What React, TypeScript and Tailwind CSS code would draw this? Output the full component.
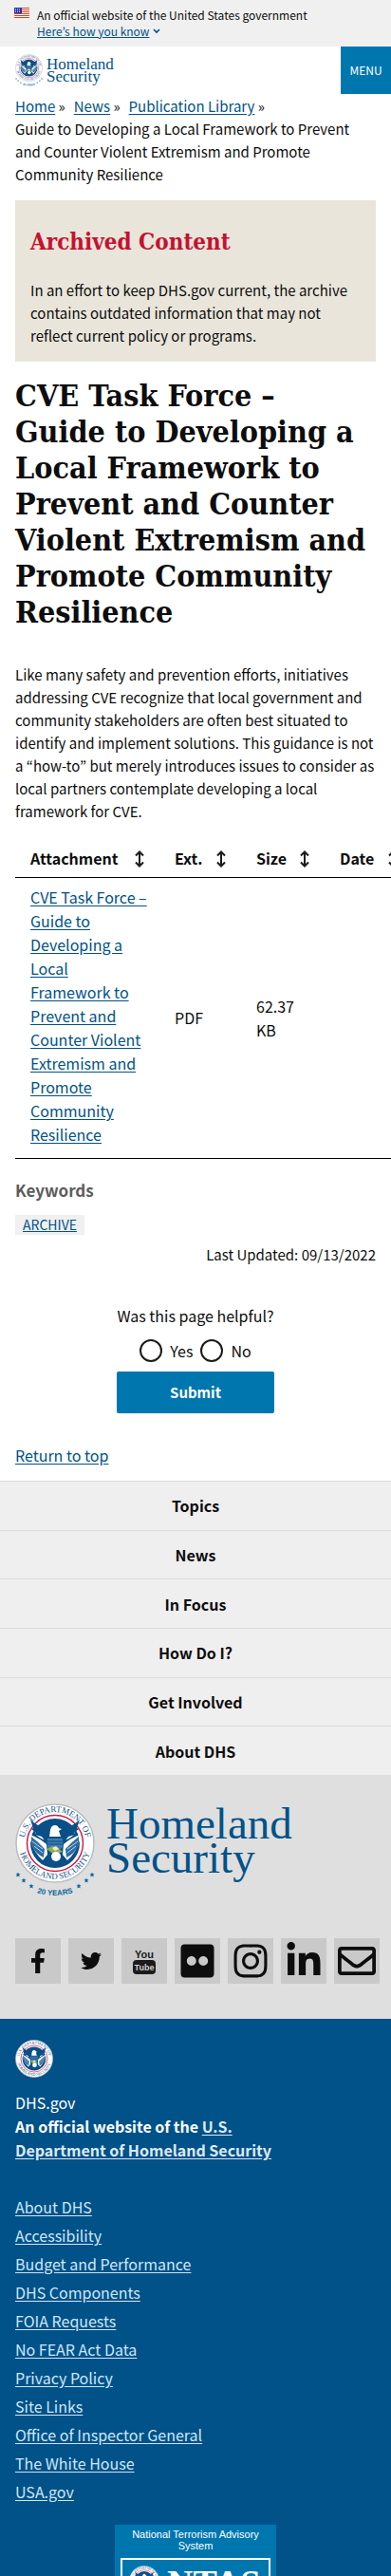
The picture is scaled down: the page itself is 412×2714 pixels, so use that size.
import React from "react";
import { FaFacebookF, FaTwitter, FaLinkedinIn, FaInstagram, FaFlickr, FaRegEnvelope } from "react-icons/fa";

const link = "text-[#005288] underline underline-offset-2";
const serif = "font-['DejaVu_Serif_Condensed','DejaVu_Serif',serif] font-bold";

function SealArt({ id }: { id: string }) {
  return (
    <g>
      <defs>
        <path id={id + "-top"} d="M9.8 46A32.500 32.500 0 1 1 74.200 46" />
        <path id={id + "-bottom"} d="M3.800 46A38.500 38.500 0 0 0 80.200 46" />
      </defs>
      <circle cx="42" cy="42" r="41" fill="#fff" stroke="#b9bcc0" strokeWidth="1.500" />
      <text fontFamily="Liberation Serif, serif" fontSize="9" fill="#16528a" textAnchor="middle">
        <textPath href={"#" + id + "-top"} startOffset="50%">U.S. DEPARTMENT OF</textPath>
      </text>
      <text fontFamily="Liberation Serif, serif" fontSize="9" fill="#16528a" textAnchor="middle">
        <textPath href={"#" + id + "-bottom"} startOffset="50%">HOMELAND SECURITY</textPath>
      </text>
      <circle cx="42" cy="42" r="29.500" fill="#fff" stroke="#d0163f" strokeWidth="1.400" />
      <circle cx="42" cy="42" r="26" fill="#0a4f88" />
      <path d="M16 33q10 4 17 10l1 11-5 6q-9-8-13-21zM68 33q-10 4-17 10l-1 11 5 6q9-8 13-21z" fill="#fff" />
      <path d="M17 35q8 6 14 13l-1 9q-9-4-13-14zM67 35q-8 6-14 13l1 9q9-4 13-14z" fill="#2c6da0" />
      <path d="M18 40l11 8M20 45l9 7M66 40l-11 8M64 45l-9 7" stroke="#cfe0ee" strokeWidth=".9" />
      <path d="M20 25q7 9 16 10h12q9-1 16-10l-2 8q-5 5-11 6l-2 5H35l-2-5q-6-1-11-6z" fill="#fff" />
      <path d="M16 17q6 6 13 8l6 6h14l6-6q7-2 13-8l-3 9 2 1-5 4 1 2-7 2-3 4q-4 2-4 5H35q0-3-4-5l-3-4-7-2 1-2-5-4 2-1z" fill="#0a4f88" />
      <path d="M37 28q1-5 5-5 3 0 4 3l3 1-3 2 2 6H36z" fill="#fff" />
      <path d="M34 37h16v9l-8 7-8-7z" fill="#3f7cad" />
      <path d="M34 40h16M34 43h16" stroke="#0a4f88" />
      <path d="M33 48l7-3 5 2 5 4-9 3z" fill="#8fae57" />
      <path d="M39 47l4-2 3 3-4 2z" fill="#f3e9c0" />
      <circle cx="43" cy="56" r="5" fill="#fff" />
    </g>
  );
}

function Seal({ id, className }: { id: string; className: string }) {
  return (
    <svg viewBox="0 0 84 84" className={className} role="img" aria-label="Department of Homeland Security seal">
      <SealArt id={id} />
    </svg>
  );
}

const star = "M0-2.600L.8-.8 2.600-.7 1.200.6 1.700 2.400 0 1.400-1.700 2.400-1.200.6-2.600-.7-.8-.8z";
const stars = [[3, 75], [9, 81], [17, 87], [67, 87], [75, 81], [81, 75]];

function AnniversarySeal({ id, className }: { id: string; className: string }) {
  return (
    <svg viewBox="0 0 84 98" className={className} role="img" aria-label="U.S. Department of Homeland Security, 20 years">
      <SealArt id={id} />
      <defs>
        <path id={id + "-years"} d="M14 91Q42 103 70 91" />
      </defs>
      {stars.map(([x, y]) => (
        <path key={x} d={star} transform={`translate(${x} ${y})`} fill="#11669b" />
      ))}
      <text fontFamily="Liberation Sans, sans-serif" fontWeight="bold" fontSize="8" fill="#11669b" textAnchor="middle">
        <textPath href={"#" + id + "-years"} startOffset="50%">20 YEARS</textPath>
      </text>
    </svg>
  );
}

function Flag() {
  return (
    <svg viewBox="0 0 16 11" className="mt-[1px] h-[11px] w-4 shrink-0" aria-hidden="true">
      <path fill="#fff" d="M0 0h16v11H0z" />
      <path stroke="#db3e1f" d="M0 .5h16M0 2.500h16M0 4.500h16M0 6.500h16M0 8.500h16M0 10.500h16" />
      <path fill="#1e33b1" d="M0 0h8v6H0z" />
      <path stroke="#fff" strokeWidth=".7" strokeDasharray="1 1" d="M1 1.500h6M1 3h6M1 4.500h6" />
    </svg>
  );
}

function YouTubeStack() {
  return (
    <svg viewBox="0 0 24 30" className="h-[30px] w-6" aria-hidden="true">
      <text x="12" y="12" textAnchor="middle" fontFamily="Liberation Sans Narrow, Liberation Sans, sans-serif" fontWeight="bold" fontSize="11" fill="#1b1b1b">You</text>
      <rect x="0" y="14" width="24" height="15" rx="4" fill="#1b1b1b" />
      <text x="12" y="25" textAnchor="middle" fontFamily="Liberation Sans Narrow, Liberation Sans, sans-serif" fontWeight="bold" fontSize="9" fill="#d0d0d0">Tube</text>
    </svg>
  );
}

function SortIcon() {
  return (
    <svg viewBox="0 0 10 18" className="h-[18px] w-[10px] shrink-0" fill="none" stroke="#1b1b1b" strokeWidth="2" aria-hidden="true">
      <path d="M5 2v14M1 5.500L5 1.500l4 4M1 12.500l4 4 4-4" />
    </svg>
  );
}

const columns = ["Attachment", "Ext.", "Size", "Date"];
const navItems = ["Topics", "News", "In Focus", "How Do I?", "Get Involved", "About DHS"];
const footerLinks = [
  "About DHS", "Accessibility", "Budget and Performance", "DHS Components", "FOIA Requests", "No FEAR Act Data",
  "Privacy Policy", "Site Links", "Office of Inspector General", "The White House", "USA.gov",
];
const social = [
  { name: "Facebook", icon: <FaFacebookF size={26} /> },
  { name: "Twitter", icon: <FaTwitter size={22} /> },
  { name: "YouTube", icon: <YouTubeStack /> },
  { name: "Flickr", icon: <FaFlickr size={40} /> },
  { name: "Instagram", icon: <FaInstagram size={40} /> },
  { name: "LinkedIn", icon: <FaLinkedinIn size={40} /> },
  { name: "Email", icon: <FaRegEnvelope size={40} /> },
];

export default function App() {
  return (
    <div className="overflow-hidden bg-white font-['Noto_Sans_CJK_KR',sans-serif] text-[15px] leading-6 text-[#0d0d0d]">
      <section className="flex gap-2 bg-[#f0f0f0] pt-[7px] pb-2 pl-[15px] text-xs leading-[17px]" aria-label="Official government website">
        <Flag />
        <div>
          <p>An official website of the United States government</p>
          <button className="flex items-center gap-1 text-[#005288]">
            <span className="underline">Here’s how you know</span>
            <svg viewBox="0 0 8 6" className="h-[6px] w-2" fill="none" stroke="currentColor" strokeWidth="1.600" aria-hidden="true"><path d="M1 1l3 3 3-3" /></svg>
          </button>
        </div>
      </section>

      <header className="flex h-[50px] justify-between pl-4">
        <a href="#" className="flex items-center gap-1 text-[#005288]">
          <AnniversarySeal id="head" className="h-[34px] w-[29px]" />
          <span className="font-['Liberation_Serif',serif] text-[17px] leading-[13px]">Homeland<br />Security</span>
        </a>
        <button className="w-[53px] bg-[#0076ae] text-xs text-white">MENU</button>
      </header>

      <main className="px-4">
        <nav aria-label="Breadcrumb" className="pt-[1px]">
          <ol className="flex flex-wrap">
            {["Home", "News", "Publication Library"].map((t) => (
              <li key={t} className="mr-[9px]"><a href="#" className={link}>{t}</a> »</li>
            ))}
            <li>Guide to Developing a Local Framework to Prevent and Counter Violent Extremism and Promote Community Resilience</li>
          </ol>
        </nav>

        <section className="mt-[15px] bg-[#e9e5da] px-4 pt-7 pb-[15px]">
          <h2 className={serif + " text-2xl leading-8 text-[#c41230]"}>Archived Content</h2>
          <p className="mt-[23px]">In an effort to keep DHS.gov current, the archive contains outdated information that may not reflect current policy or programs.</p>
        </section>

        <h1 className={serif + " mt-[17px] text-[32px] leading-[38px]"}>CVE Task Force –<br /> Guide to Developing a Local Framework to Prevent and Counter Violent Extremism and Promote Community Resilience</h1>

        <p className="mt-[35px]">Like many safety and prevention efforts, initiatives addressing CVE recognize that local government and community stakeholders are often best situated to identify and implement solutions. This guidance is not a “how-to” but merely introduces issues to consider as local partners contemplate developing a local framework for CVE.</p>

        <table className="mt-[18px] w-[419px] table-fixed border-collapse text-left text-base leading-[25px]">
          <colgroup><col className="w-[152px]" /><col className="w-[86px]" /><col className="w-[88px]" /><col /></colgroup>
          <thead>
            <tr className="border-b border-black">
              {columns.map((c) => (
                <th key={c} scope="col" className="py-[7px] pl-4">
                  <button className="flex w-full items-center justify-between pr-4">{c}<SortIcon /></button>
                </th>
              ))}
            </tr>
          </thead>
          <tbody>
            <tr className="border-b border-black">
              <td className="pt-2 pr-3 pb-3 pl-4"><a href="#" className={link}>CVE Task Force – Guide to Developing a Local Framework to Prevent and Counter Violent Extremism and Promote Community Resilience</a></td>
              <td className="pl-4">PDF</td>
              <td className="pr-7 pl-4">62.37 KB</td>
              <td />
            </tr>
          </tbody>
        </table>

        <h2 className="mt-[21px] text-[17px] leading-6 font-bold text-[#5c5c5c]">Keywords</h2>
        <a href="#" className="mt-[14px] inline-block bg-[#f0f0f0] px-2 text-sm leading-[21px] text-[#005288] underline">ARCHIVE</a>
        <p className="mt-2 text-right">Last Updated: 09/13/2022</p>

        <form className="mx-auto mt-10 w-[166px] text-base" onSubmit={(e) => e.preventDefault()}>
          <fieldset>
            <legend className="w-full text-center whitespace-nowrap">Was this page helpful?</legend>
            <div className="mt-[13px] flex items-center justify-center gap-2">
              {["Yes", "No"].map((t) => (
                <label key={t} className="flex items-center gap-2">
                  <input type="radio" name="helpful" value={t} className="size-6 appearance-none rounded-full border-2 border-[#1b1b1b] checked:bg-[#005288]" />{t}
                </label>
              ))}
            </div>
          </fieldset>
          <button className="mt-[10px] h-11 w-full rounded-xs bg-[#0076ae] text-[15px] font-bold text-white">Submit</button>
        </form>

        <p className="mt-8 mb-[15px] text-base"><a href="#" className={link}>Return to top</a></p>
      </main>

      <nav aria-label="Footer" className="grid h-[310px] auto-rows-fr bg-[#efefef] text-base">
        {navItems.map((t) => (
          <a key={t} href="#" className="flex items-center justify-center border-t border-[#dcdcdc] font-bold">{t}</a>
        ))}
      </nav>

      <section className="bg-[#dfdfdf] px-4 pt-[30px] pb-[37px]">
        <a href="#" className="flex items-start gap-3 text-[#005288]">
          <AnniversarySeal id="foot" className="h-[98px] w-[84px]" />
          <span className="pt-[3px] font-['Liberation_Serif',serif] text-[47px] leading-9">Homeland<br />Security</span>
        </a>
        <ul className="mt-11 flex gap-2">
          {social.map(({ name, icon }) => (
            <li key={name} className="shrink-0">
              <a href="#" aria-label={name} className="flex size-12 items-center justify-center bg-[#c9c9c9]">{icon}</a>
            </li>
          ))}
        </ul>
      </section>

      <footer className="bg-[#005288] px-4 pt-[22px] text-base text-[#dff0fb]">
        <Seal id="agency" className="size-10" />
        <p className="mt-[14px] leading-[25px] text-white">DHS.gov</p>
        <p className="max-w-[280px] leading-[25px] font-bold text-white">An official website of the <a href="#" className="text-[#dfe9f3] underline underline-offset-2">U.S. Department of Homeland Security</a></p>
        <ul className="mt-8">
          {footerLinks.map((t) => (
            <li key={t} className="leading-[30px]"><a href="#" className="text-[#cfe6f7] underline underline-offset-2">{t}</a></li>
          ))}
        </ul>
        <div className="mt-5 h-[54px] overflow-hidden">
          <a href="#" className="mx-auto block w-[170px] bg-[#0076ae] px-[6px] pt-1 pb-2 text-center font-['Liberation_Sans',sans-serif] text-[11px] leading-3 text-white">
            National Terrorism Advisory System
            <span className="mt-[7px] flex h-16 items-start gap-2 border-2 border-white px-[7px] pt-[6px]">
              <Seal id="ntas" className="size-8 shrink-0" />
              <span className="font-['Liberation_Serif',serif] text-[38px] leading-9 font-bold">NTAS</span>
            </span>
          </a>
        </div>
      </footer>
    </div>
  );
}
